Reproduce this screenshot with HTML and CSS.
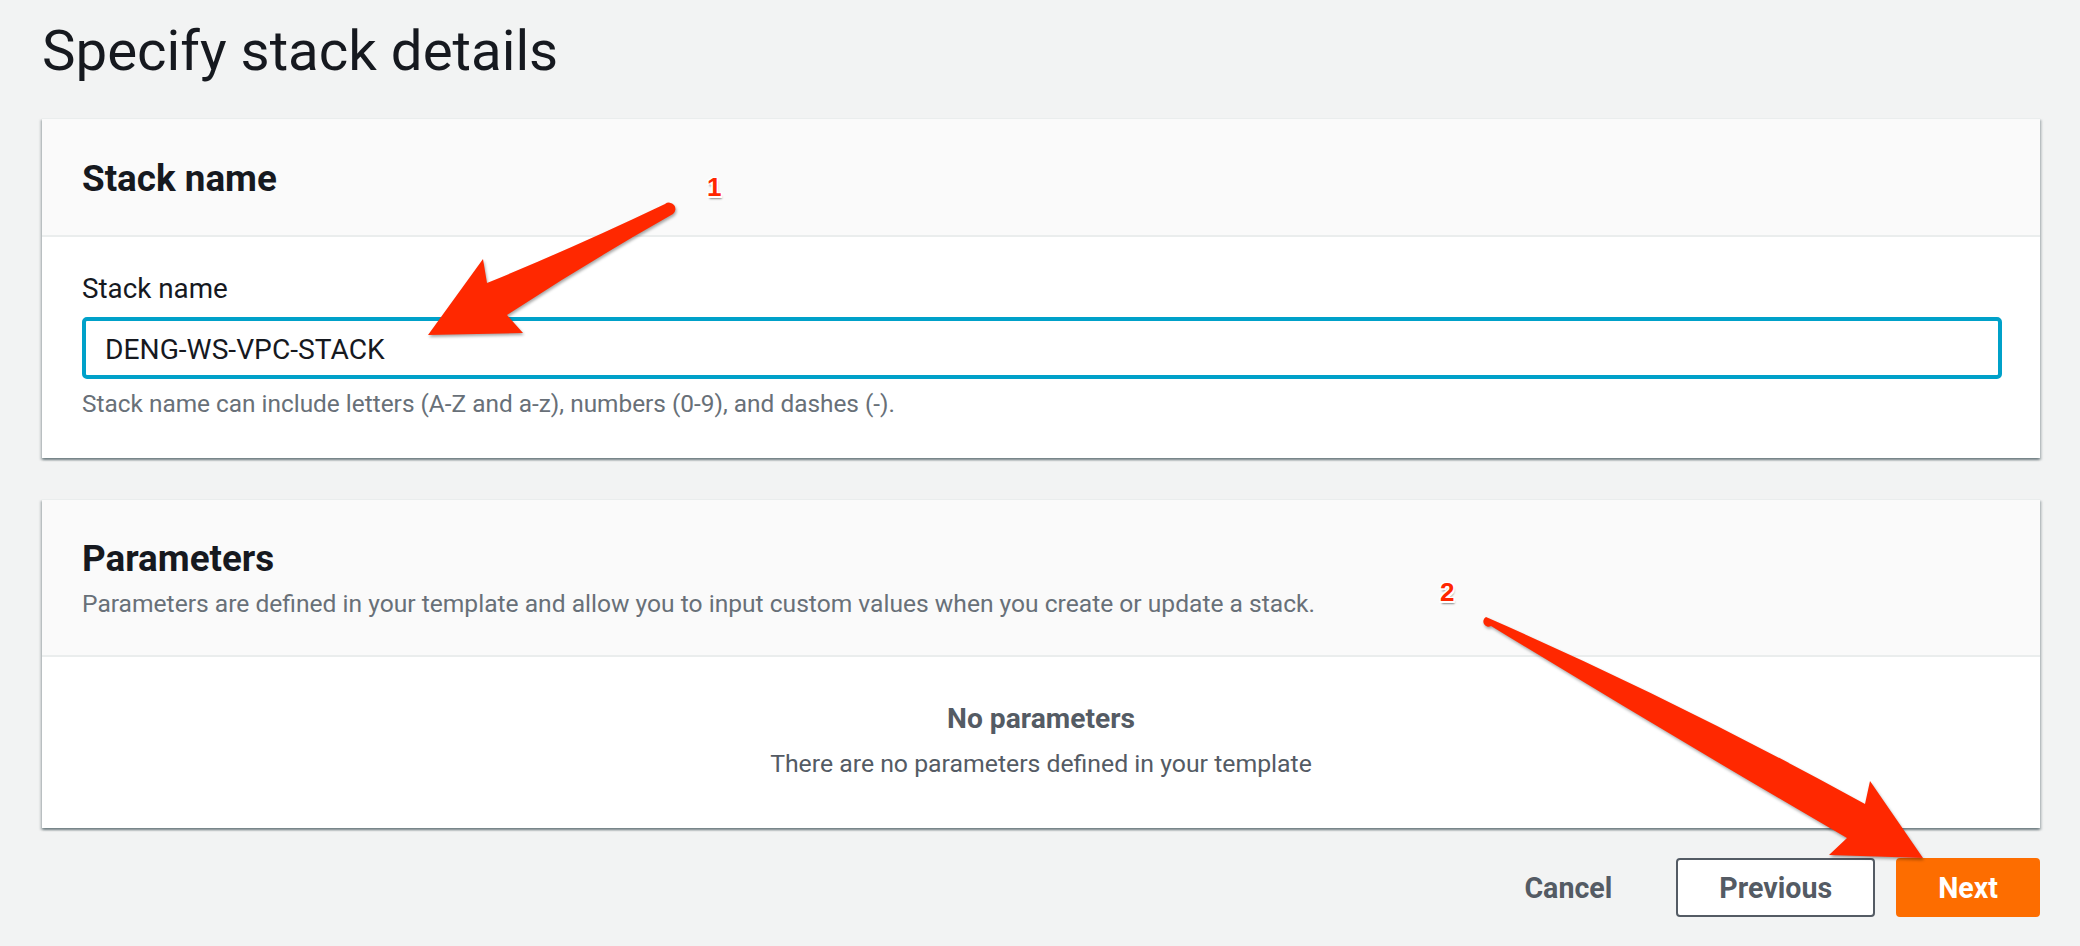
FILE: index.html
```html
<!DOCTYPE html>
<html lang="en">
<head>
<meta charset="utf-8">
<title>Specify stack details</title>
<link rel="stylesheet" href="styles.css">
</head>
<body>
<main class="page">
  <h1 class="title">Specify stack details</h1>

  <section class="card">
    <div class="card-header">
      <h2 class="card-title">Stack name</h2>
    </div>
    <div class="card-body">
      <label class="field-label" for="stack-name">Stack name</label>
      <input class="field-input" id="stack-name" type="text" value="DENG-WS-VPC-STACK">
      <p class="field-hint">Stack name can include letters (A-Z and a-z), numbers (0-9), and dashes (-).</p>
    </div>
  </section>

  <section class="card card-params">
    <div class="card-header">
      <h2 class="card-title">Parameters</h2>
      <p class="card-desc">Parameters are defined in your template and allow you to input custom values when you create or update a stack.</p>
    </div>
    <div class="card-body empty">
      <div class="empty-title">No parameters</div>
      <div class="empty-text">There are no parameters defined in your template</div>
    </div>
  </section>

  <div class="actions">
    <button class="btn btn-link" type="button">Cancel</button>
    <button class="btn btn-normal" type="button">Previous</button>
    <button class="btn btn-primary" type="button">Next</button>
  </div>
</main>

<svg class="annotations" width="2080" height="946" viewBox="0 0 2080 946" aria-hidden="true">
  <path class="arrow" d="M428,335 L483,259 L487,283 Q575,247 665,204 A5.5,5.5 0 0 1 673,214 Q588,262 507,315 L523,333 Z"/>
  <path class="arrow" d="M1923,858 L1829,855 L1847,838 Q1668,734 1491,626 A4.8,4.8 0 0 1 1486,617 Q1676,700 1865,804 L1870,781 Z"/>
</svg>
<span class="mark mark-one">1</span>
<span class="mark mark-two">2</span>
</body>
</html>
```

FILE: styles.css
```css
* { box-sizing: border-box; }
html, body { margin: 0; padding: 0; }
body {
  background: #f2f3f3;
  font-family: Roboto, "Liberation Sans", sans-serif;
  color: #16191f;
  width: 2080px;
  height: 946px;
  overflow: hidden;
  position: relative;
}
.page {
  padding: 11px 40px 0 42px;
  display: flex;
  flex-direction: column;
}
.title {
  margin: 0;
  font-size: 56.4px;
  line-height: 80px;
  font-weight: 400;
  color: #16191f;
}
.card {
  margin-top: 27px;
  background: #fff;
  border-top: 1px solid #eaeded;
  box-shadow: 0 2px 2px 0 rgba(0,28,36,.35), 2px 2px 2px 0 rgba(0,28,36,.15), -2px 2px 2px 0 rgba(0,28,36,.15);
}
.card-params { margin-top: 41px; }
.card-header {
  background: #fafafa;
  border-bottom: 2px solid #eaeded;
  padding: 36px 40px 32px;
}
.card-params .card-header { padding: 35px 40px 34px; }
.card-title {
  margin: 0;
  font-size: 36.8px;
  line-height: 48px;
  font-weight: 700;
}
.card-desc {
  margin: 4px 0 0;
  font-size: 24.6px;
  line-height: 34px;
  color: #687078;
}
.card-body {
  padding: 32px 38px 37px 40px;
  display: flex;
  flex-direction: column;
}
.field-label {
  font-size: 27.8px;
  line-height: 40px;
}
.field-input {
  margin-top: 8px;
  height: 62px;
  width: 100%;
  border: 4px solid #00a1c9;
  border-radius: 5px;
  padding: 2px 19px 0;
  font-family: inherit;
  font-size: 28.2px;
  color: #16191f;
  background: #fff;
  outline: none;
}
.field-hint {
  margin: 8px 0 0;
  font-size: 24.4px;
  line-height: 34px;
  color: #687078;
}
.empty {
  align-items: center;
  padding: 42px 40px 47px;
  text-align: center;
  color: #545b64;
}
.empty-title {
  font-size: 28.2px;
  line-height: 40px;
  font-weight: 700;
}
.empty-text {
  margin-top: 8px;
  font-size: 24.8px;
  line-height: 34px;
}
.actions {
  margin-top: 30px;
  display: flex;
  justify-content: flex-end;
  gap: 21px;
}
.btn {
  height: 59px;
  padding: 0 41px;
  border: 2px solid transparent;
  border-radius: 4px;
  font-family: inherit;
  font-size: 28.6px;
  font-weight: 700;
  background: transparent;
  color: #545b64;
}
.btn-normal { background: #fff; border-color: #545b64; }
.btn-primary { background: #fd6d00; border-color: #fd6d00; color: #fff; padding: 0 40px; }
.annotations {
  position: absolute;
  left: 0;
  top: 0;
  pointer-events: none;
}
.arrow {
  fill: #ff2800;
  filter: drop-shadow(1px 2px 1.5px rgba(0,0,0,.35));
}
.mark {
  position: absolute;
  font-family: "Liberation Sans", sans-serif;
  font-weight: 700;
  font-size: 26px;
  line-height: 1;
  color: #ff2600;
  text-shadow: -1.5px -1.5px 0 #fff, 1.5px -1.5px 0 #fff, -1.5px 1.5px 0 #fff, 1.5px 1.5px 0 #fff, 1px 2.5px 2px rgba(0,0,0,.45);
}
.mark-one { left: 707px; top: 174px; }
.mark-two { left: 1440px; top: 579px; }
```
